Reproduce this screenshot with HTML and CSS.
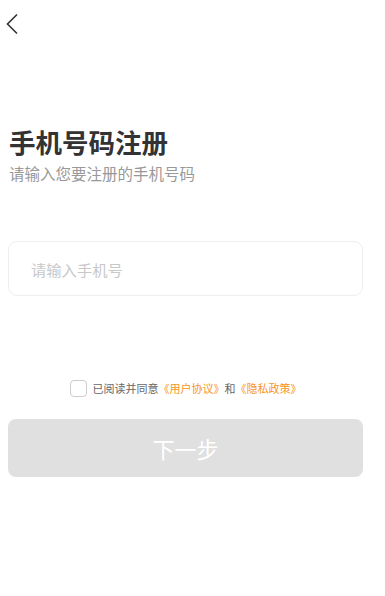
FILE: index.html
```html
<!DOCTYPE html>
<html lang="zh-CN">
<head>
  <meta charset="UTF-8" />
  <meta name="viewport" content="width=device-width, initial-scale=1" />
  <title>手机号码注册</title>
  <link rel="stylesheet" href="styles.css">
</head>
<body>
  <div class="topbar">
    <a href="#" class="back" aria-label="返回">
      <svg width="14" height="22" viewBox="0 0 14 22">
        <path d="M12 1.5 L2.5 11 L12 20.5" fill="none" stroke="#333" stroke-width="1.6" />
      </svg>
    </a>
  </div>

  <div class="page">
    <h1 class="title">手机号码注册</h1>
    <p class="subtitle">请输入您要注册的手机号码</p>

    <div class="field">
      <input type="tel" class="phone-input" placeholder="请输入手机号" />
    </div>

    <label class="agree">
      <span class="checkbox"></span>
      <span class="agree-text">已阅读并同意<a href="#" class="link">《用户协议》</a>和<a href="#" class="link">《隐私政策》</a></span>
    </label>

    <button class="next-btn" disabled>下一步</button>
  </div>
</body>
</html>
```

FILE: styles.css
```css
body {
  margin: 0;
  background: #fff;
  font-family: "Noto Sans CJK SC", "Noto Sans", sans-serif;
  color: #333;
}

/* top bar with back arrow */
.topbar {
  height: 46px;
  display: flex;
  align-items: center;
  padding-left: 5px;
}

.back {
  display: flex;
  padding-top: 2px;
}

.page {
  padding: 0 22px 0 8px;
}

.title {
  margin: 80px 0 0 1px;
  font-size: 26.5px;
  line-height: 32px;
  font-weight: 700;
  color: #333;
}

.subtitle {
  margin: 3px 0 0 1px;
  font-size: 15.5px;
  line-height: 24px;
  color: #999;
}

.field {
  margin-top: 56px;
}

.phone-input {
  box-sizing: border-box;
  width: 100%;
  height: 55px;
  border: 1px solid #eee;
  border-radius: 9px;
  padding: 0 22px;
  font-family: inherit;
  font-size: 15.3px;
  color: #333;
  outline: none;
}

.phone-input::placeholder {
  color: #c8c8c8;
}

.agree {
  display: flex;
  align-items: center;
  justify-content: center;
  gap: 6px;
  margin-top: 82px;
  height: 20px;
  font-size: 11px;
  color: #666;
}

.checkbox {
  box-sizing: border-box;
  width: 17px;
  height: 17px;
  border: 1px solid #ccc;
  border-radius: 4px;
}

.link {
  color: #f7941d;
  text-decoration: none;
}

.next-btn {
  display: block;
  width: 100%;
  height: 58px;
  margin-top: 21px;
  border: none;
  border-radius: 8px;
  background: #e0e0e0;
  color: #fff;
  font-family: inherit;
  font-size: 22px;
}
```
